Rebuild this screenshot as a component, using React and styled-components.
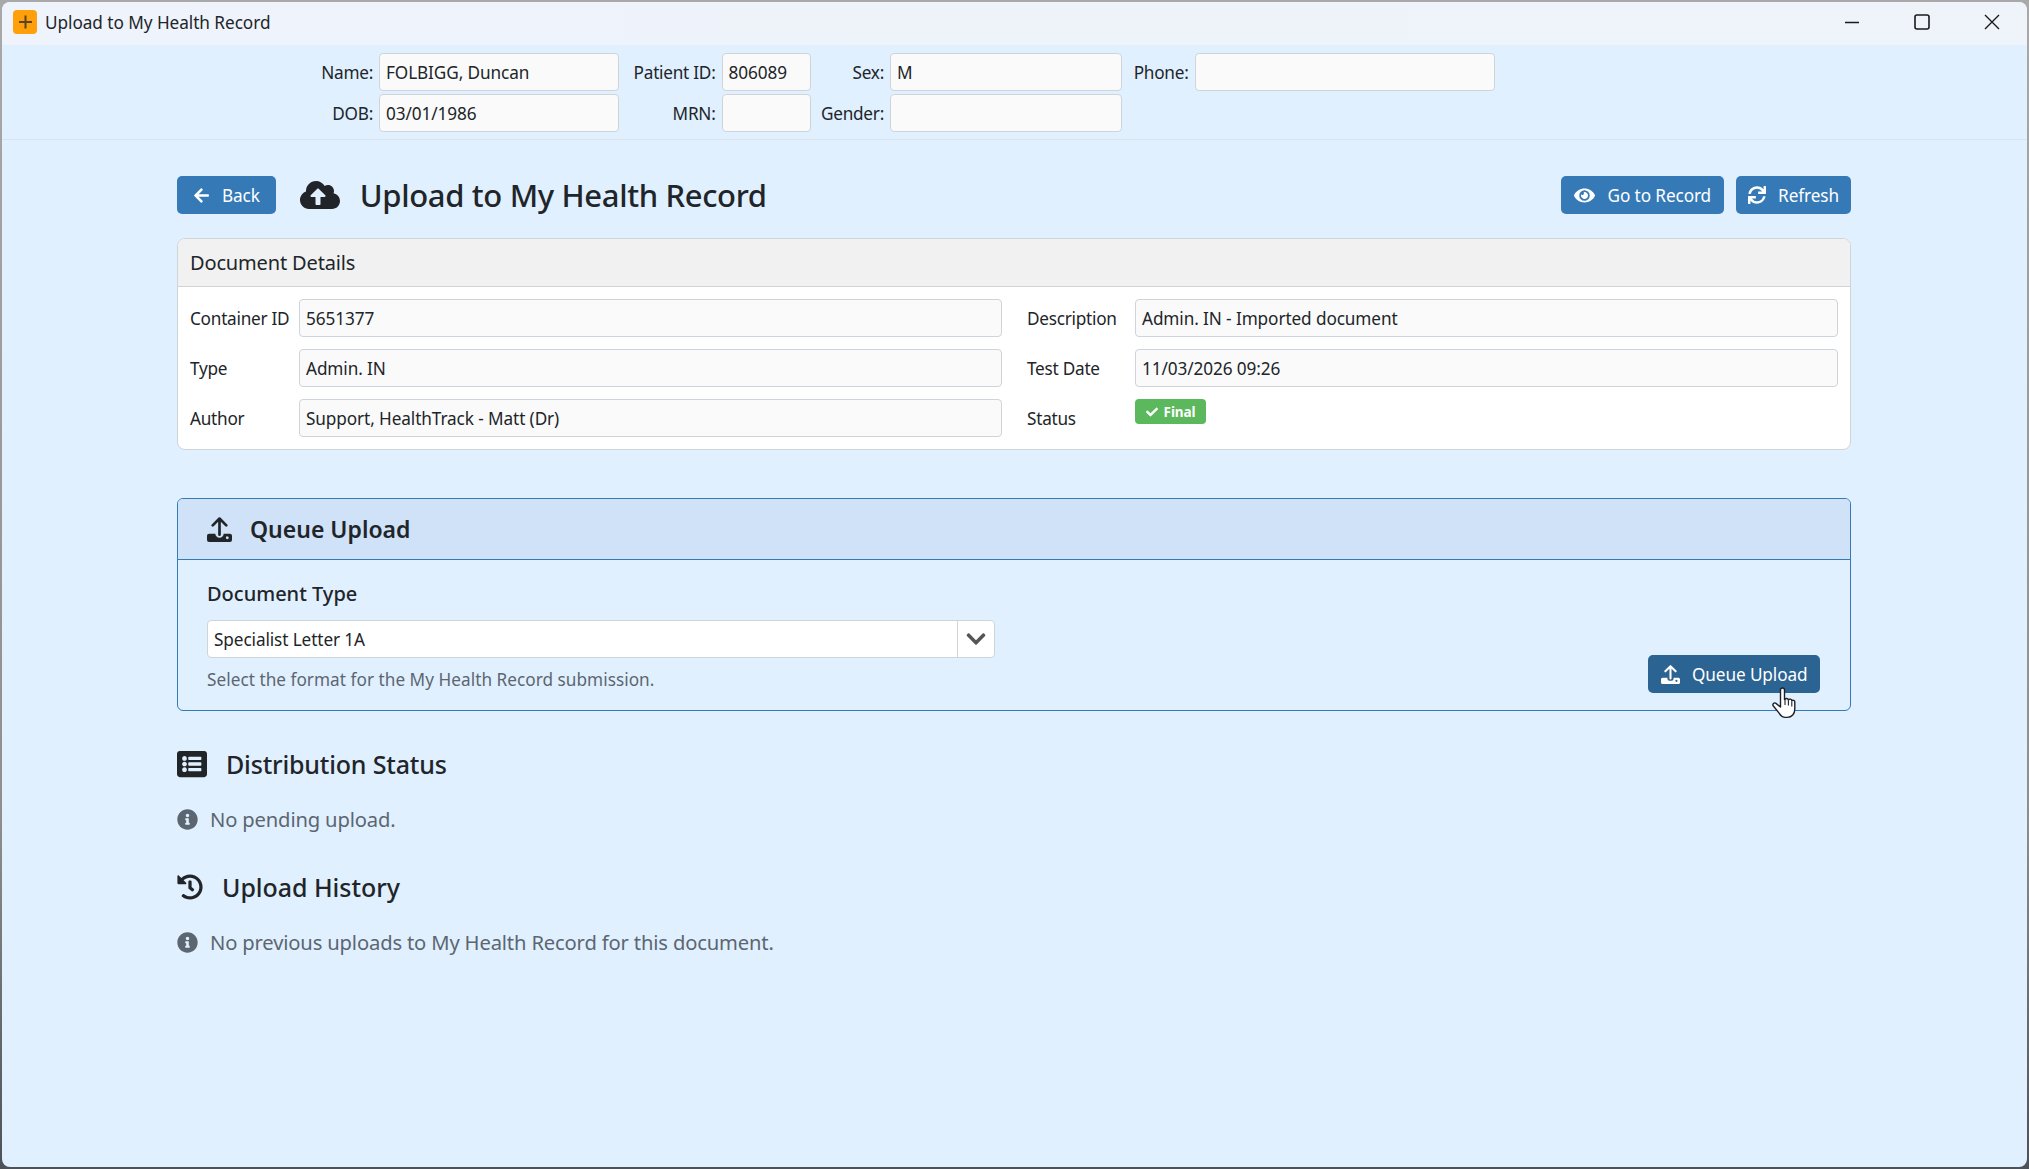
import React from 'react';
import styled, { createGlobalStyle } from 'styled-components';
import {
    FaArrowLeft, FaCheck, FaChevronDown, FaCloudUploadAlt, FaEye, FaHistory,
    FaInfoCircle, FaListAlt, FaSync,
} from 'react-icons/fa';

const GlobalStyle = createGlobalStyle`
    html, body {
        margin: 0;
        height: 100%;
    }
    body {
        background: linear-gradient(180deg, #a9a9a9 0%, #8e8e8e 70%, #4c5257 100%);
        font-family: "Noto Sans", "Open Sans", sans-serif;
        color: #212529;
    }
`;

const Window = styled.div`
    box-sizing: border-box;
    height: calc(100vh - 4px);
    margin: 2px;
    background: #e0f0ff;
    border-radius: 8px;
    overflow: hidden;
    display: flex;
    flex-direction: column;
`;

const TitleBar = styled.div`
    box-sizing: border-box;
    height: 43px;
    flex: none;
    display: flex;
    align-items: center;
    padding: 0 0 3px 11px;
    background: linear-gradient(90deg, #eff3fc, #eef4f9);
`;

const AppLogo = styled.svg`
    width: 24px;
    height: 24px;
    flex: none;
    margin-right: 8px;
`;

const TitleText = styled.span`
    font-size: 17.2px;
    letter-spacing: -0.05px;
    flex: 1;
`;

const WinButton = styled.button`
    width: 70px;
    height: 40px;
    border: 0;
    padding: 0;
    background: none;
    display: flex;
    align-items: center;
    justify-content: center;
`;

const PatientBar = styled.div`
    box-sizing: border-box;
    height: 95px;
    flex: none;
    padding: 8px 0 0 311px;
    border-bottom: 1px solid #d9e3ec;
    display: grid;
    grid-template-columns: 60px 240px 90.5px 89px 67.5px 232px 60.5px 300px;
    grid-auto-rows: 38px;
    column-gap: 6px;
    row-gap: 3px;
    justify-content: start;
`;

const BarLabel = styled.div`
    align-self: center;
    text-align: right;
    font-size: 17.2px;
    letter-spacing: -0.25px;
    white-space: nowrap;
`;

const Field = styled.div`
    box-sizing: border-box;
    height: 100%;
    padding: 0 6px;
    display: flex;
    align-items: center;
    background: #fafafa;
    border: 1px solid #ced4da;
    border-radius: 4px;
    font-size: 17.2px;
    letter-spacing: -0.1px;
    white-space: nowrap;
`;

const Content = styled.div`
    padding: 36px 176px 0 175px;
    display: flex;
    flex-direction: column;
`;

const Toolbar = styled.div`
    display: flex;
    align-items: center;
    height: 38px;
    margin-bottom: 24px;
`;

const Button = styled.button`
    box-sizing: border-box;
    height: 38px;
    padding: 0 ${(p) => p.$pad || 13}px;
    display: inline-flex;
    align-items: center;
    gap: ${(p) => p.$gap || 12}px;
    border: 0;
    border-radius: 5px;
    background: ${(p) => (p.$dark ? '#2b6393' : '#357ab7')};
    color: #fff;
    font-family: inherit;
    font-size: 17.2px;
    letter-spacing: -0.1px;
    white-space: nowrap;
    margin-left: ${(p) => p.$ml || 0}px;
`;

const PageTitle = styled.h1`
    margin: 0 0 0 20px;
    font-size: 31px;
    font-weight: 500;
    letter-spacing: -0.35px;
    flex: 1;
`;

const TitleIcon = styled(FaCloudUploadAlt)`
    font-size: 40px;
    margin-left: 24px;
`;

const Card = styled.div`
    box-sizing: border-box;
    height: 212px;
    background: #fff;
    border: 1px solid #cfd4d8;
    border-radius: 8px;
    overflow: hidden;
`;

const CardHeader = styled.div`
    box-sizing: border-box;
    height: 48px;
    padding: 0 12px;
    display: flex;
    align-items: center;
    background: #f1f1f1;
    border-bottom: 1px solid #cfd4d8;
    font-size: 20px;
    letter-spacing: -0.15px;
`;

const DetailGrid = styled.div`
    padding: 12px 12px 0;
    display: grid;
    grid-template-columns: 109px 703px 133px 703px;
    grid-auto-rows: 38px;
    row-gap: 12px;
`;

const DetailLabel = styled.div`
    align-self: center;
    font-size: 17.2px;
    letter-spacing: -0.25px;
    white-space: nowrap;
    padding-left: ${(p) => (p.$right ? 25 : 0)}px;
`;

const Badge = styled.span`
    align-self: start;
    justify-self: start;
    box-sizing: border-box;
    height: 25px;
    width: 71px;
    display: inline-flex;
    align-items: center;
    justify-content: center;
    gap: 6px;
    border-radius: 4px;
    background: #5cb85c;
    color: #fff;
    font-size: 13.5px;
    font-weight: 700;
    letter-spacing: -0.1px;
`;

const QueueCard = styled.div`
    box-sizing: border-box;
    height: 213px;
    margin-top: 48px;
    border: 1px solid #337ab7;
    border-radius: 6px;
`;

const QueueHeader = styled.div`
    box-sizing: border-box;
    height: 61px;
    padding: 0 29px;
    display: flex;
    align-items: center;
    gap: 18px;
    background: #cfe2f8;
    border-bottom: 1px solid #337ab7;
    border-radius: 5px 5px 0 0;
    font-size: 23px;
    font-weight: 600;
`;

const QueueBody = styled.div`
    position: relative;
    display: flex;
    justify-content: space-between;
    align-items: flex-end;
    padding: 19px 30px 17px 29px;
`;

const FieldLabel = styled.div`
    font-size: 20px;
    font-weight: 500;
    line-height: 30px;
    margin-bottom: 11px;
`;

const SelectBox = styled.div`
    box-sizing: border-box;
    width: 788px;
    height: 38px;
    display: flex;
    align-items: center;
    background: #fff;
    border: 1px solid #ced4da;
    border-radius: 4px;
    font-size: 17.2px;
    letter-spacing: -0.1px;
`;

const SelectText = styled.span`
    flex: 1;
    padding-left: 6px;
`;

const SelectArrow = styled.span`
    box-sizing: border-box;
    width: 37px;
    height: 100%;
    display: flex;
    align-items: center;
    justify-content: center;
    border-left: 1px solid #ced4da;
    color: #555;
    font-size: 22px;
`;

const HelpText = styled.div`
    margin-top: 8px;
    font-size: 17.2px;
    letter-spacing: 0.03px;
    line-height: 27px;
    color: #5c6670;
`;

const Cursor = styled.svg`
    position: absolute;
    right: 54px;
    bottom: -9px;
    width: 24px;
    height: 32px;
`;

const SectionTitle = styled.h2`
    margin: ${(p) => p.$mt}px 0 0;
    display: flex;
    align-items: center;
    gap: ${(p) => p.$gap}px;
    font-size: 25px;
    font-weight: 500;
    letter-spacing: ${(p) => p.$ls}px;
    line-height: 36px;
`;

const EmptyNote = styled.div`
    margin-top: 22px;
    display: flex;
    align-items: center;
    gap: 12px;
    font-size: 20.2px;
    letter-spacing: -0.16px;
    line-height: 30px;
    color: #5c6670;
`;

function UploadIcon({ size }) {
    return (
        <svg width={size} height={size} viewBox="0 0 24 24" fill="currentColor">
            <path d="M12 1.5V17M5.5 8L12 1.5 18.5 8" fill="none" stroke="currentColor" strokeWidth="2.6" strokeLinecap="round" strokeLinejoin="round" />
            <path
                fillRule="evenodd"
                d="M2 16h6a4 4 0 0 0 8 0h6a2 2 0 0 1 2 2v4a2 2 0 0 1-2 2H2a2 2 0 0 1-2-2v-4a2 2 0 0 1 2-2zM19.5 18.6a1.4 1.4 0 1 0 0 2.8 1.4 1.4 0 0 0 0-2.8z"
            />
        </svg>
    );
}

export default function App() {
    return (
        <Window>
            <GlobalStyle />
            <TitleBar>
                <AppLogo viewBox="0 0 24 24">
                    <rect width="24" height="24" rx="4" fill="#ff9f0a" />
                    <path d="M12.5 5.5v13M6 12h13" stroke="#5a4320" strokeWidth="2" />
                </AppLogo>
                <TitleText>Upload to My Health Record</TitleText>
                <WinButton>
                    <svg width="14" height="14" viewBox="0 0 14 14"><path d="M0 7.5h14" stroke="#1a1a1a" strokeWidth="1.3" /></svg>
                </WinButton>
                <WinButton>
                    <svg width="16" height="16" viewBox="0 0 16 16"><rect x="1" y="1" width="14" height="14" rx="2" fill="none" stroke="#1a1a1a" strokeWidth="1.6" /></svg>
                </WinButton>
                <WinButton>
                    <svg width="16" height="16" viewBox="0 0 16 16"><path d="M1 1l14 14M15 1L1 15" stroke="#1a1a1a" strokeWidth="1.4" /></svg>
                </WinButton>
            </TitleBar>

            <PatientBar>
                <BarLabel>Name:</BarLabel>
                <Field>FOLBIGG, Duncan</Field>
                <BarLabel>Patient ID:</BarLabel>
                <Field>806089</Field>
                <BarLabel>Sex:</BarLabel>
                <Field>M</Field>
                <BarLabel>Phone:</BarLabel>
                <Field />
                <BarLabel>DOB:</BarLabel>
                <Field>03/01/1986</Field>
                <BarLabel>MRN:</BarLabel>
                <Field />
                <BarLabel>Gender:</BarLabel>
                <Field />
            </PatientBar>

            <Content>
                <Toolbar>
                    <Button $pad={16} $gap={12}><FaArrowLeft size={17} />Back</Button>
                    <TitleIcon />
                    <PageTitle>Upload to My Health Record</PageTitle>
                    <Button $gap={12}><FaEye size={21} />Go to Record</Button>
                    <Button $pad={12} $ml={12} $gap={12}><FaSync size={18} />Refresh</Button>
                </Toolbar>

                <Card>
                    <CardHeader>Document Details</CardHeader>
                    <DetailGrid>
                        <DetailLabel>Container ID</DetailLabel>
                        <Field>5651377</Field>
                        <DetailLabel $right>Description</DetailLabel>
                        <Field>Admin. IN - Imported document</Field>
                        <DetailLabel>Type</DetailLabel>
                        <Field>Admin. IN</Field>
                        <DetailLabel $right>Test Date</DetailLabel>
                        <Field>11/03/2026 09:26</Field>
                        <DetailLabel>Author</DetailLabel>
                        <Field>Support, HealthTrack - Matt (Dr)</Field>
                        <DetailLabel $right>Status</DetailLabel>
                        <Badge><FaCheck size={12} />Final</Badge>
                    </DetailGrid>
                </Card>

                <QueueCard>
                    <QueueHeader><UploadIcon size={25} />Queue Upload</QueueHeader>
                    <QueueBody>
                        <div>
                            <FieldLabel>Document Type</FieldLabel>
                            <SelectBox>
                                <SelectText>Specialist Letter 1A</SelectText>
                                <SelectArrow><FaChevronDown /></SelectArrow>
                            </SelectBox>
                            <HelpText>Select the format for the My Health Record submission.</HelpText>
                        </div>
                        <Button $dark $gap={12} $pad={12.5}><UploadIcon size={19} />Queue Upload</Button>
                        <Cursor viewBox="0 0 24 32">
                            <path
                                d="M8.5 3a2 2 0 0 1 4 0v9.5l.5 0a1.8 1.8 0 0 1 3.4.6 1.8 1.8 0 0 1 3.4.8 1.7 1.7 0 0 1 3 1.1v7c0 4.8-3 8.4-7.5 8.4h-2c-3 0-4.5-1.5-6-4L1 18.5a1.9 1.9 0 0 1 2.6-2.4L8.5 20z"
                                fill="#fff"
                                stroke="#1c2128"
                                strokeWidth="1.4"
                                strokeLinejoin="round"
                            />
                            <path d="M13 13v5M16.4 13.6v5M19.8 14.5v5" stroke="#1c2128" strokeWidth="1.1" fill="none" />
                        </Cursor>
                    </QueueBody>
                </QueueCard>

                <SectionTitle $mt={35} $gap={19} $ls={-0.18}><FaListAlt size={30} />Distribution Status</SectionTitle>
                <EmptyNote><FaInfoCircle size={21} />No pending upload.</EmptyNote>
                <SectionTitle $mt={35} $gap={19} $ls={-0.05}><FaHistory size={26} />Upload History</SectionTitle>
                <EmptyNote><FaInfoCircle size={21} />No previous uploads to My Health Record for this document.</EmptyNote>
            </Content>
        </Window>
    );
}
